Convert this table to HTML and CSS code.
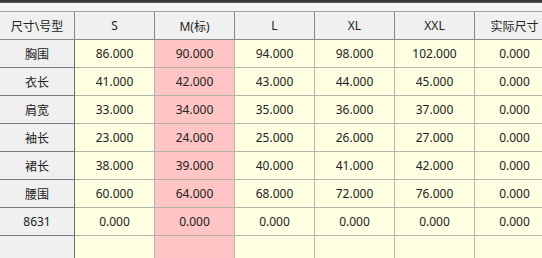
FILE: index.html
```html
<!DOCTYPE html>
<html lang="zh">
<head>
<meta charset="utf-8">
<title>尺寸表</title>
<link rel="stylesheet" href="styles.css">
</head>
<body>
<div class="topbar"></div>
<div class="band"></div>
<div class="grid">
  <div class="cell hd first">尺寸\号型</div>
  <div class="cell hd">S</div>
  <div class="cell hd">M(标)</div>
  <div class="cell hd">L</div>
  <div class="cell hd">XL</div>
  <div class="cell hd">XXL</div>
  <div class="cell hd">实际尺寸</div>

  <div class="cell rh">胸围</div>
  <div class="cell d">86.000</div><div class="cell d m">90.000</div><div class="cell d">94.000</div><div class="cell d">98.000</div><div class="cell d">102.000</div><div class="cell d">0.000</div>

  <div class="cell rh">衣长</div>
  <div class="cell d">41.000</div><div class="cell d m">42.000</div><div class="cell d">43.000</div><div class="cell d">44.000</div><div class="cell d">45.000</div><div class="cell d">0.000</div>

  <div class="cell rh">肩宽</div>
  <div class="cell d">33.000</div><div class="cell d m">34.000</div><div class="cell d">35.000</div><div class="cell d">36.000</div><div class="cell d">37.000</div><div class="cell d">0.000</div>

  <div class="cell rh">袖长</div>
  <div class="cell d">23.000</div><div class="cell d m">24.000</div><div class="cell d">25.000</div><div class="cell d">26.000</div><div class="cell d">27.000</div><div class="cell d">0.000</div>

  <div class="cell rh">裙长</div>
  <div class="cell d">38.000</div><div class="cell d m">39.000</div><div class="cell d">40.000</div><div class="cell d">41.000</div><div class="cell d">42.000</div><div class="cell d">0.000</div>

  <div class="cell rh">腰围</div>
  <div class="cell d">60.000</div><div class="cell d m">64.000</div><div class="cell d">68.000</div><div class="cell d">72.000</div><div class="cell d">76.000</div><div class="cell d">0.000</div>

  <div class="cell rh">8631</div>
  <div class="cell d">0.000</div><div class="cell d m">0.000</div><div class="cell d">0.000</div><div class="cell d">0.000</div><div class="cell d">0.000</div><div class="cell d">0.000</div>

  <div class="cell rh last"></div>
  <div class="cell d last"></div><div class="cell d m last"></div><div class="cell d last"></div><div class="cell d last"></div><div class="cell d last"></div><div class="cell d last"></div>
</div>
</body>
</html>
```
FILE: styles.css
```css
html, body {
  margin: 0;
  padding: 0;
  width: 542px;
  height: 258px;
  overflow: hidden;
  background: #f0f0f0;
}
body {
  font-family: "Noto Sans", "Noto Sans CJK SC", sans-serif;
  font-size: 12px;
  color: #222222;
}
.topbar {
  height: 3px;
  background: linear-gradient(#2a2a2a, #5a5a5a);
}
.band {
  height: 8px;
  background: #f4f4f4;
}
.grid {
  display: grid;
  grid-template-columns: 75px repeat(6, 80px);
  grid-template-rows: repeat(8, 28px) 22px;
  border-top: 1px solid #a0a0a0;
  width: 555px;
}
.cell {
  box-sizing: border-box;
  display: flex;
  align-items: center;
  justify-content: center;
  border-right: 1px solid #b4b4ac;
  border-bottom: 1px solid #b4b4ac;
  white-space: nowrap;
  overflow: hidden;
}
.hd {
  background: #f0f0f0;
  border-right-color: #8a8a8a;
  border-bottom-color: #8a8a8a;
}
.rh {
  background: #f0f0f0;
  border-right-color: #6e6e6e;
  border-bottom-color: #7a7a7a;
}
.d {
  background: #ffffe1;
}
.m {
  background: #ffc4c4;
}
.last {
  border-bottom: none;
}
```
